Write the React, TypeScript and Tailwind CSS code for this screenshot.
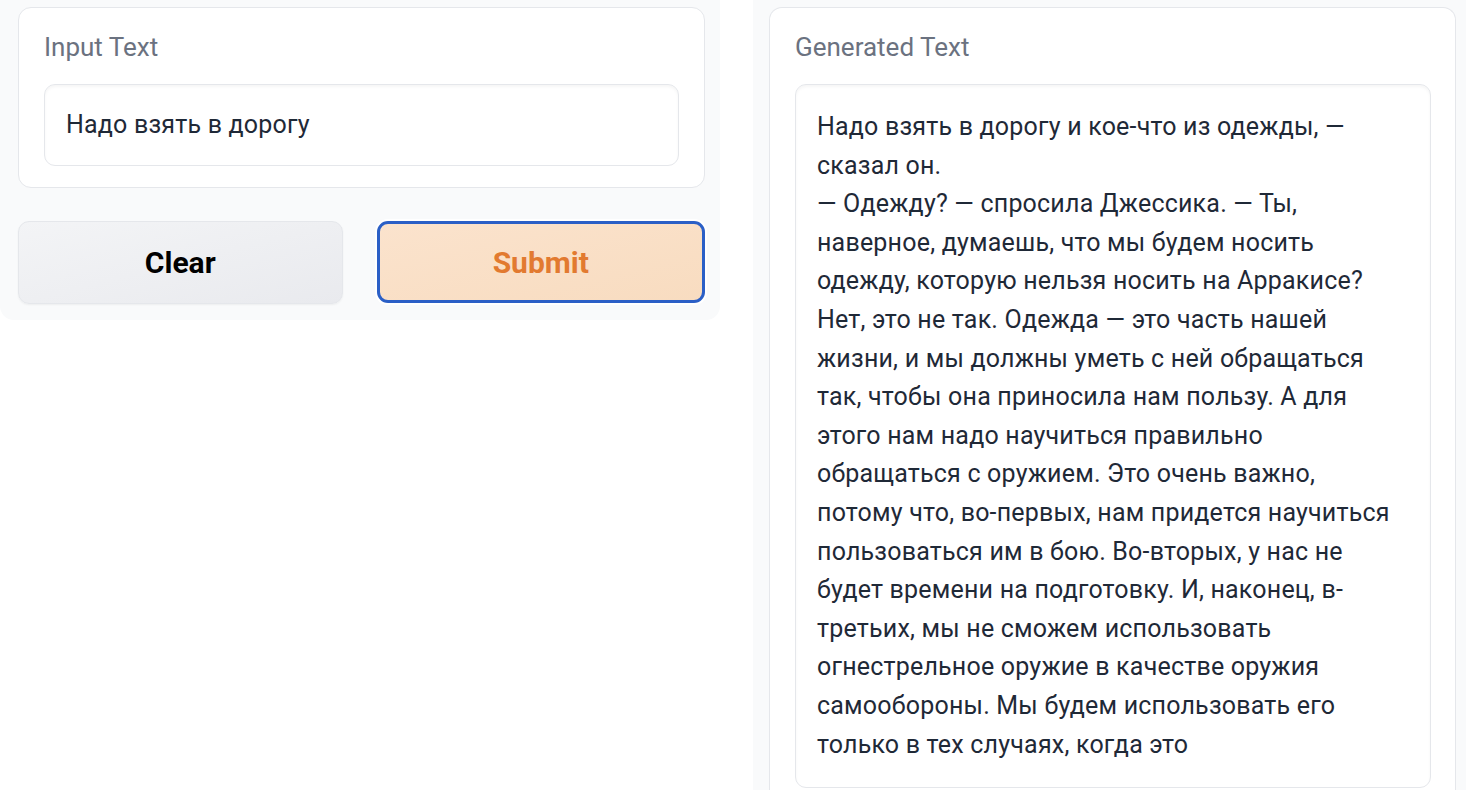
import React from 'react';

const FONT = { fontFamily: '"Source Sans Pro", Roboto, Lato, "Noto Sans", sans-serif' };

const OUTPUT_LINES = [
  'Надо взять в дорогу и кое-что из одежды, —',
  'сказал он.',
  '— Одежду? — спросила Джессика. — Ты,',
  'наверное, думаешь, что мы будем носить',
  'одежду, которую нельзя носить на Арракисе?',
  'Нет, это не так. Одежда — это часть нашей',
  'жизни, и мы должны уметь с ней обращаться',
  'так, чтобы она приносила нам пользу. А для',
  'этого нам надо научиться правильно',
  'обращаться с оружием. Это очень важно,',
  'потому что, во-первых, нам придется научиться',
  'пользоваться им в бою. Во-вторых, у нас не',
  'будет времени на подготовку. И, наконец, в-',
  'третьих, мы не сможем использовать',
  'огнестрельное оружие в качестве оружия',
  'самообороны. Мы будем использовать его',
  'только в тех случаях, когда это',
];

function Label({ children }: { children: React.ReactNode }) {
  return <div className="text-[26px] leading-[30px] text-[#6b7280]">{children}</div>;
}

export default function App() {
  return (
    <div className="flex h-[790px] w-[1466px] overflow-hidden bg-white text-[#1f2937]" style={FONT}>
      {/* Left column */}
      <div className="flex h-[320px] w-[720px] shrink-0 flex-col rounded-b-[14px] bg-[#f9fafb] pl-[18px] pr-[15px] pt-[7px]">
        <div className="flex flex-col rounded-[13px] border border-[#e5e7eb] bg-white px-[25px] pb-[21px] pt-[24px]">
          <Label>Input Text</Label>
          <div className="mt-[22px] rounded-[11px] border border-[#e5e7eb] bg-white px-[21px] py-[21px] text-[25px] leading-[38px] tracking-[0.2px] shadow-[inset_0_2px_3px_rgba(0,0,0,0.04)]">
            Надо взять в дорогу
          </div>
        </div>

        <div className="mt-[33px] flex gap-[34px]">
          <button className="h-[83px] flex-1 rounded-[11px] border border-[#e5e7eb] bg-gradient-to-br from-[#f3f4f6] to-[#e9eaee] text-[30px] font-bold text-black shadow-[0_1px_2px_rgba(0,0,0,0.05)]">
            Clear
          </button>
          <button className="h-[82px] flex-1 rounded-[11px] border-[3px] border-[#2b5fc6] bg-gradient-to-br from-[#fbe3cd] to-[#f8dcc0] text-[30px] font-bold text-[#e27a30] shadow-[0_0_0_2px_#ffffff]">
            Submit
          </button>
        </div>
      </div>

      {/* Right column */}
      <div className="ml-[33px] flex flex-1 flex-col bg-[#f9fafb] pl-[16px] pr-[10px] pt-[7px]">
        <div className="flex flex-1 flex-col rounded-t-[13px] border border-b-0 border-[#e5e7eb] bg-white pl-[25px] pr-[24px] pt-[24px]">
          <Label>Generated Text</Label>
          <div className="mt-[22px] h-[704px] rounded-[11px] border border-[#e5e7eb] bg-white px-[21px] pt-[23px] text-[25px] leading-[38.6px] tracking-[0.2px] shadow-[inset_0_2px_3px_rgba(0,0,0,0.04)]">
            {OUTPUT_LINES.map((line, i) => (
              <div key={i} className="whitespace-nowrap">
                {line}
              </div>
            ))}
          </div>
        </div>
      </div>
    </div>
  );
}
